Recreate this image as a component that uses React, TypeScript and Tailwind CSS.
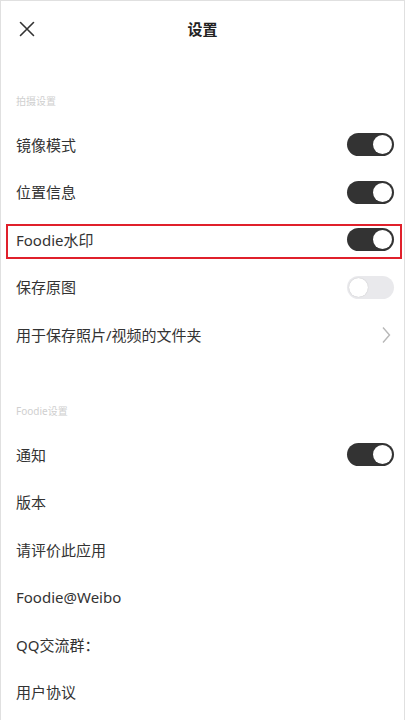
import type { ReactNode } from "react";

type Row = {
  label: string;
  toggle?: "on" | "off";
  chevron?: boolean;
  highlight?: boolean;
};

const shootRows: Row[] = [
  { label: "镜像模式", toggle: "on" },
  { label: "位置信息", toggle: "on" },
  { label: "Foodie水印", toggle: "on", highlight: true },
  { label: "保存原图", toggle: "off" },
  { label: "用于保存照片/视频的文件夹", chevron: true },
];

const appRows: Row[] = [
  { label: "通知", toggle: "on" },
  { label: "版本" },
  { label: "请评价此应用" },
  { label: "Foodie@Weibo" },
  { label: "QQ交流群：" },
  { label: "用户协议" },
];

function Toggle({ on }: { on: boolean }) {
  return on ? (
    <div className="flex h-[23px] w-[47px] items-center justify-end rounded-full bg-[#333333] px-[2px]">
      <div className="h-[19px] w-[19px] rounded-full bg-white" />
    </div>
  ) : (
    <div className="flex h-[23px] w-[47px] items-center justify-start rounded-full bg-[#e9e9ec] px-[2px]">
      <div className="h-[19px] w-[19px] rounded-full bg-white shadow-[0_0_1px_rgba(0,0,0,0.25)]" />
    </div>
  );
}

function SettingRow({ row }: { row: Row }) {
  return (
    <div className="relative flex h-[47.5px] items-center justify-between pl-[15px] pr-[10px]">
      <span className="text-[15px] text-[#333333]">{row.label}</span>
      {row.toggle && <Toggle on={row.toggle === "on"} />}
      {row.chevron && (
        <svg
          width="10"
          height="18"
          viewBox="0 0 10 18"
          fill="none"
          stroke="#b8b8b8"
          strokeWidth="1.4"
          className="mr-[3px]"
        >
          <path d="M2 1.5 L8.5 9 L2 16.5" />
        </svg>
      )}
      {row.highlight && (
        <div className="absolute left-[5px] right-[2px] top-[8px] h-[35px] border-2 border-[#e0202b]" />
      )}
    </div>
  );
}

function SectionLabel({ height, children }: { height: string; children: ReactNode }) {
  return (
    <div className={`flex items-end pl-[15px] pb-[14px] ${height}`}>
      <span className="text-[10px] leading-[12px] text-[#cfcfcf]">{children}</span>
    </div>
  );
}

export default function App() {
  return (
    <div
      className="h-[720px] w-full overflow-hidden border-x border-t border-[#e0e0e0] bg-white"
      style={{ fontFamily: '"Noto Sans", "Noto Sans CJK SC", sans-serif' }}
    >
      <div className="relative flex h-14 items-center justify-center">
        <svg
          width="16"
          height="16"
          viewBox="0 0 16 16"
          stroke="#333333"
          strokeWidth="1.6"
          strokeLinecap="round"
          className="absolute left-[18px] top-[20px]"
        >
          <path d="M1.5 1.5 L14.5 14.5 M14.5 1.5 L1.5 14.5" />
        </svg>
        <span className="text-[15px] font-semibold text-[#222222]">设置</span>
      </div>

      <SectionLabel height="h-[64px]">拍摄设置</SectionLabel>
      {shootRows.map((r) => (
        <SettingRow key={r.label} row={r} />
      ))}

      <SectionLabel height="h-[72.5px]">Foodie设置</SectionLabel>
      {appRows.map((r) => (
        <SettingRow key={r.label} row={r} />
      ))}
    </div>
  );
}
